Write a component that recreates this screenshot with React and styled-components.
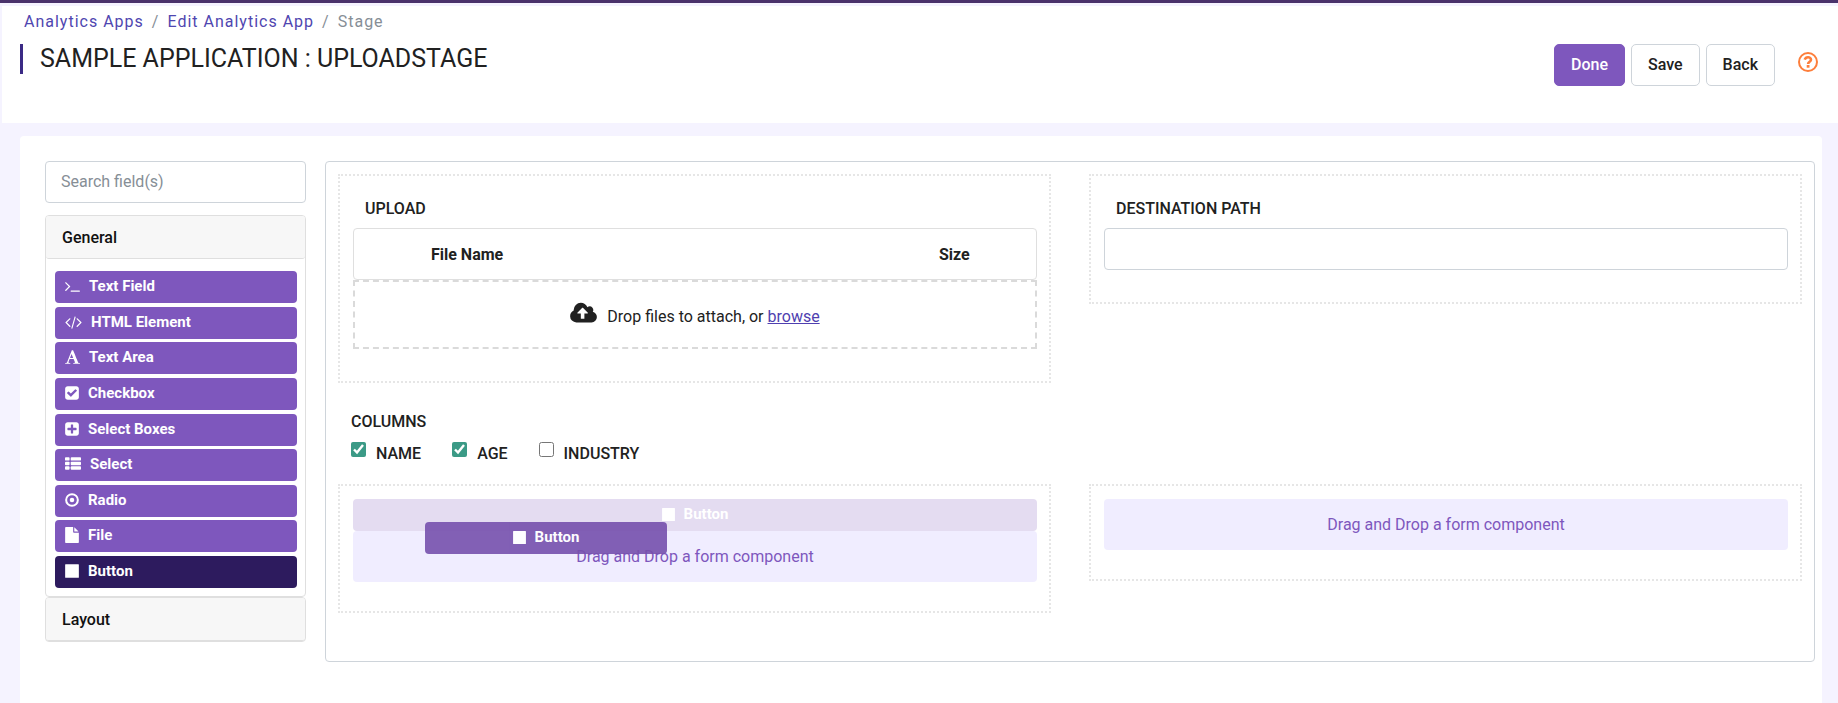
import React from "react";
import styled, { createGlobalStyle, css } from "styled-components";

const GlobalStyle = createGlobalStyle`
  *, *::before, *::after { box-sizing: border-box; }
  body {
    margin: 0;
    background: #f5f3ff;
    color: #212121;
    font-family: Roboto, "Liberation Sans", sans-serif;
    font-size: 16px;
    line-height: 24px;
  }
  button, input { font: inherit; }
`;

const Page = styled.div`
  display: flex;
  flex-direction: column;
  min-height: 100vh;
  border-top: 3px solid #4a326b;
`;

const Header = styled.header`
  margin: 3px 0 13px 2px;
  padding: 4px 20px 37px 18px;
  background: #fff;
`;

const Breadcrumb = styled.nav`
  display: flex;
  gap: 8px;
  padding-left: 4px;
  color: #868e96;
  letter-spacing: 1px;

  a {
    color: #4f46b0;
    text-decoration: none;
  }
`;

const TitleRow = styled.div`
  display: flex;
  justify-content: space-between;
  align-items: flex-start;
  padding-top: 10px;
`;

const Title = styled.h1`
  margin: 0;
  padding-left: 17px;
  border-left: 3px solid #3b2a85;
  font-size: 25px;
  line-height: 30px;
  font-weight: 400;
  text-transform: uppercase;
`;

const Actions = styled.div`
  display: flex;
  gap: 6px;
`;

const ActionButton = styled.button`
  height: 42px;
  padding: 0 16px;
  border: 1px solid ${(p) => (p.$primary ? "#7e57bd" : "#ced4da")};
  border-radius: 5px;
  background: ${(p) => (p.$primary ? "#7e57bd" : "#fff")};
  color: ${(p) => (p.$primary ? "#fff" : "#212121")};
  font-weight: 500;
`;

const HelpButton = styled.button`
  margin: 8px 0 0 17px;
  padding: 0;
  width: 20px;
  height: 20px;
  border: 0;
  background: none;
  color: #fd7e3b;

  svg { display: block; }
`;

const Panel = styled.main`
  flex: 1;
  display: flex;
  align-items: flex-start;
  gap: 19px;
  margin: 0 16px 0 20px;
  padding: 25px 7px 41px 25px;
  border-radius: 4px 4px 0 0;
  background: #fff;
`;

const Sidebar = styled.aside`
  flex: 0 0 261px;
`;

const TextInput = styled.input`
  display: block;
  width: 100%;
  height: 42px;
  padding: 0 15px 2px;
  border: 1px solid #ced4da;
  border-radius: 4px;
  background: #fff;
  color: #212121;

  &::placeholder { color: #868e96; opacity: 1; }
`;

const Group = styled.section`
  border: 1px solid #dfdfdf;
  border-radius: 4px;

  &:first-of-type { margin-top: 12px; }
`;

const GroupTitle = styled.button`
  display: block;
  width: 100%;
  height: 43px;
  padding: 2px 16px 0;
  border: 0;
  border-bottom: 1px solid #dfdfdf;
  border-radius: 3px;
  background: #f7f7f7;
  color: #111;
  font-weight: 500;
  text-align: left;
`;

const FieldList = styled.div`
  display: flex;
  flex-direction: column;
  justify-content: space-between;
  min-height: 337px;
  padding: 12px 8px 8px 9px;
`;

const Chip = styled.button`
  display: flex;
  align-items: center;
  gap: 9px;
  width: 100%;
  height: 32px;
  padding: 0 10px 2px;
  border: 0;
  border-radius: 4px;
  background: ${(p) => (p.$active ? "#2d1b5e" : "#7e57bd")};
  color: #fff;
  font-size: 15px;
  font-weight: 700;

  svg { display: block; flex: none; }

  ${(p) =>
    p.$ghost &&
    css`
      justify-content: center;
      background: #e4dcf1;
    `}

  ${(p) =>
    p.$floating &&
    css`
      position: absolute;
      left: 72px;
      top: 23px;
      width: 242px;
      justify-content: center;
      background: #7650ad;
      opacity: 0.9;
    `}
`;

const Canvas = styled.section`
  flex: 1;
  min-width: 0;
  padding: 12px 12px 48px;
  border: 1px solid #ced4da;
  border-radius: 4px;
`;

const Row = styled.div`
  display: grid;
  grid-template-columns: 1fr 1fr;
  align-items: start;
  gap: 38px;
`;

const Cell = styled.div`
  padding: 13px 12px ${(p) => (p.$drop ? 29 : 32)}px 13px;
  border: 2px dotted #e6e6e6;
`;

const FieldLabel = styled.label`
  display: flex;
  align-items: center;
  height: 39px;
  padding-left: 12px;
  font-weight: 500;
`;

const FileTable = styled.table`
  width: 100%;
  height: 52px;
  border: 1px solid #dfdfdf;
  border-radius: 4px;
  border-spacing: 0;
  table-layout: fixed;

  th {
    padding: 2px 0 0;
    font-weight: 700;
    text-align: left;
  }
  td { width: 77px; padding: 0; }
  th:last-child { width: 97px; }
`;

const DropZone = styled.div`
  display: flex;
  align-items: center;
  justify-content: center;
  gap: 10px;
  height: 69px;
  padding-top: 4px;
  border: 2px dashed #dadada;

  svg { margin-bottom: 6px; }
  a { color: #4f3fb0; }
`;

const CheckGroup = styled.fieldset`
  margin: 0;
  padding: 0 13px;
  border: 0;

  legend {
    padding: 27px 0 8px;
    font-weight: 500;
  }
`;

const Options = styled.div`
  display: flex;
  gap: 31px;
  padding-bottom: 18px;
`;

const Option = styled.label`
  display: flex;
  align-items: flex-start;
  gap: 10px;
  font-weight: 500;

  input {
    width: 15px;
    height: 15px;
    margin: 0;
    accent-color: #3b9a86;
  }
`;

const DropSlot = styled.div`
  position: relative;
`;

const DropHint = styled.div`
  height: 51px;
  border-radius: 4px;
  background: #f0edff;
  color: #7e57bd;
  line-height: 51px;
  text-align: center;
`;

const square =
  "v960q0 119-84.500 203.500t-203.500 84.500h-960q-119 0-203.500-84.500t-84.500-203.500v-960q0-119 84.500-203.500t203.500-84.500h960q119 0 203.500 84.500t84.500 203.500z";

const glyphs = {
  terminal: {
    box: [76, 1664],
    shape: <path d="M649 983l-466 466q-10 10-23 10t-23-10l-50-50q-10-10-10-23t10-23l393-393-393-393q-10-10-10-23t10-23l50-50q10-10 23-10t23 10l466 466q10 10 10 23t-10 23zm1079 457v64q0 14-9 23t-23 9h-960q-14 0-23-9t-9-23v-64q0-14 9-23t23-9h960q14 0 23 9t9 23z" />,
  },
  code: {
    box: [64, 1920],
    shape: <path d="M681 1399l-50 50q-10 10-23 10t-23-10l-466-466q-10-10-10-23t10-23l466-466q10-10 23-10t23 10l50 50q10 10 10 23t-10 23l-393 393 393 393q10 10 10 23t-10 23zm591-1067l-373 1291q-4 13-15.500 19.500t-23.500 2.500l-62-17q-13-4-19.500-15.500t-2.500-24.500l373-1291q4-13 15.500-19.500t23.500-2.500l62 17q13 4 19.500 15.500t2.500 24.500zm657 651l-466 466q-10 10-23 10t-23-10l-50-50q-10-10-10-23t10-23l393-393-393-393q-10-10-10-23t10-23l50-50q10-10 23-10t23 10l466 466q10 10 10 23t-10 23z" />,
  },
  font: {
    box: [0, 1664],
    shape: <path d="M725 559l-170 450q33 0 136.500 2t160.500 2q19 0 57-2-87-253-184-452zm-725 1105l2-79q23-7 56-12.500t57-10.500 49.500-14.500 44.500-29 31-50.500l237-616 280-724h128q8 14 11 21l205 480q33 78 106 257.500t114 274.500q15 34 58 144.500t72 168.500q20 45 35 57 19 15 88 29.500t84 20.500q6 38 6 57 0 5-.5 13.500t-.5 12.500q-63 0-190-8t-191-8q-76 0-215 7t-178 8q0-43 4-78l131-28q1 0 12.500-2.500t15.500-3.500 14.500-4.500 15-6.500 11-8 9-11 2.500-14q0-16-31-96.500t-72-177.500-42-100l-450-2q-26 58-76.500 195.500t-50.500 162.500q0 22 14 37.500t43.500 24.500 48.500 13.500 57 8.500 41 4q1 19 1 58 0 9-2 27-58 0-174.500-10t-174.500-10q-8 0-26.500 4t-21.500 4q-80 14-188 14z" />,
  },
  check: {
    box: [128, 1536],
    shape: <path d={"M813 1299l614-614q19-19 19-45t-19-45l-102-102q-19-19-45-19t-45 19l-467 467-211-211q-19-19-45-19t-45 19l-102 102q-19 19-19 45t19 45l358 358q19 19 45 19t45-19zm851-883" + square} />,
  },
  plus: {
    box: [128, 1536],
    shape: <path d={"M1408 960v-128q0-26-19-45t-45-19h-320v-320q0-26-19-45t-45-19h-128q-26 0-45 19t-19 45v320h-320q-26 0-45 19t-19 45v128q0 26 19 45t45 19h320v320q0 26 19 45t45 19h128q26 0 45-19t19-45v-320h320q26 0 45-19t19-45zm256-544" + square} />,
  },
  list: {
    box: [0, 1792],
    shape: [128, 640, 1152].map((y) => (
      <g key={y}>
        <rect x="0" y={y} width="512" height="384" rx="96" />
        <rect x="640" y={y} width="1152" height="384" rx="96" />
      </g>
    )),
  },
  radio: {
    box: [128, 1536],
    shape: (
      <>
        <circle cx="896" cy="896" r="256" />
        <circle cx="896" cy="896" r="656" fill="none" stroke="currentColor" strokeWidth="224" />
      </>
    ),
  },
  file: {
    box: [128, 1536],
    shape: <path d="M1152 512v-472q22 14 36 28l408 408q14 14 28 36h-472zm-128 32q0 40 28 68t68 28h544v1056q0 40-28 68t-68 28h-1344q-40 0-68-28t-28-68v-1600q0-40 28-68t68-28h800v544z" />,
  },
  stop: {
    box: [128, 1536],
    shape: <rect x="128" y="128" width="1536" height="1536" rx="64" />,
  },
  cloud: {
    box: [0, 1920],
    shape: <path d="M1280 864q0-14-9-23l-352-352q-9-9-23-9t-23 9l-351 351q-10 12-10 24 0 14 9 23t23 9h224v352q0 13 9.500 22.500t22.500 9.500h192q13 0 22.500-9.500t9.500-22.500v-352h224q13 0 22.500-9.500t9.500-22.500zm640 288q0 159-112.500 271.500t-271.500 112.500h-1088q-185 0-316.500-131.500t-131.500-316.500q0-130 70-240t188-165q-2-30-2-43 0-212 150-362t362-150q156 0 285.500 87t188.500 231q71-62 166-62 106 0 181 75t75 181q0 76-41 138 130 31 213.500 135.500t83.500 238.500z" />,
  },
};

function Glyph({ name, size = 16 }) {
  const { box, shape } = glyphs[name];
  return (
    <svg
      width={Math.round((box[1] / 1792) * size)}
      height={size}
      viewBox={`${box[0]} 0 ${box[1]} 1792`}
      fill="currentColor"
      aria-hidden="true"
    >
      {shape}
    </svg>
  );
}

const fields = [
  ["terminal", "Text Field"],
  ["code", "HTML Element"],
  ["font", "Text Area"],
  ["check", "Checkbox"],
  ["plus", "Select Boxes"],
  ["list", "Select"],
  ["radio", "Radio"],
  ["file", "File"],
  ["stop", "Button"],
];

const columns = [
  ["NAME", true],
  ["AGE", true],
  ["INDUSTRY", false],
];

export default function App() {
  return (
    <Page>
      <GlobalStyle />
      <Header>
        <Breadcrumb aria-label="Breadcrumb">
          <a href="#apps">Analytics Apps</a>
          <span>/</span>
          <a href="#edit">Edit Analytics App</a>
          <span>/</span>
          <span>Stage</span>
        </Breadcrumb>
        <TitleRow>
          <Title>Sample Application : UploadStage</Title>
          <Actions>
            <ActionButton $primary>Done</ActionButton>
            <ActionButton>Save</ActionButton>
            <ActionButton>Back</ActionButton>
            <HelpButton aria-label="Help">
              <svg width="20" height="20" viewBox="0 0 20 20" fill="none" stroke="currentColor">
                <circle cx="10" cy="10" r="9" strokeWidth="2" />
                <path d="M6.700 7.700C7.300 5.900 8.600 5.200 10 5.200c1.700 0 3 1 3 2.500 0 2-2.900 2-2.900 4.200" strokeWidth="2.600" />
                <path d="M8.700 13h2.800v2.700H8.700z" fill="currentColor" stroke="none" />
              </svg>
            </HelpButton>
          </Actions>
        </TitleRow>
      </Header>

      <Panel>
        <Sidebar>
          <TextInput type="search" aria-label="Search fields" placeholder="Search field(s)" />
          <Group>
            <GroupTitle aria-expanded="true">General</GroupTitle>
            <FieldList>
              {fields.map(([icon, label]) => (
                <Chip key={label} $active={label === "Button"}>
                  <Glyph name={icon} />
                  {label}
                </Chip>
              ))}
            </FieldList>
          </Group>
          <Group>
            <GroupTitle aria-expanded="false">Layout</GroupTitle>
          </Group>
        </Sidebar>

        <Canvas>
          <Row>
            <Cell>
              <FieldLabel as="div">UPLOAD</FieldLabel>
              <FileTable>
                <thead>
                  <tr>
                    <td />
                    <th scope="col">File Name</th>
                    <th scope="col">Size</th>
                  </tr>
                </thead>
              </FileTable>
              <DropZone>
                <Glyph name="cloud" size={25} />
                <span>
                  Drop files to attach, or <a href="#browse">browse</a>
                </span>
              </DropZone>
            </Cell>
            <Cell>
              <FieldLabel htmlFor="destination">DESTINATION PATH</FieldLabel>
              <TextInput id="destination" type="text" />
            </Cell>
          </Row>

          <CheckGroup>
            <legend>COLUMNS</legend>
            <Options>
              {columns.map(([label, checked]) => (
                <Option key={label}>
                  <input type="checkbox" defaultChecked={checked} />
                  {label}
                </Option>
              ))}
            </Options>
          </CheckGroup>

          <Row>
            <Cell $drop>
              <DropSlot>
                <Chip $ghost>
                  <Glyph name="stop" size={15} />
                  Button
                </Chip>
                <DropHint>Drag and Drop a form component</DropHint>
                <Chip $floating>
                  <Glyph name="stop" size={15} />
                  Button
                </Chip>
              </DropSlot>
            </Cell>
            <Cell $drop>
              <DropHint>Drag and Drop a form component</DropHint>
            </Cell>
          </Row>
        </Canvas>
      </Panel>
    </Page>
  );
}
